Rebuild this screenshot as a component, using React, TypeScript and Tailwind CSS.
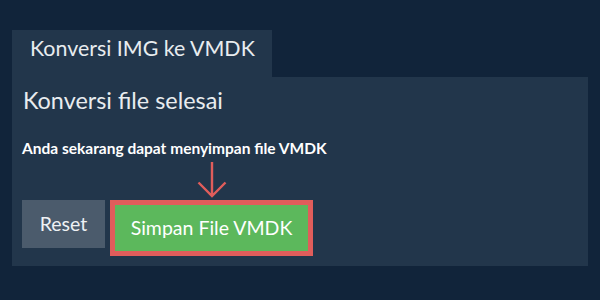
export default function App() {
  return (
    <div
      className="w-[600px] h-[300px] bg-[#11243a] pt-[30px] px-[12px]"
      style={{ fontFamily: 'Lato, "Open Sans", sans-serif' }}
    >
      <div className="flex">
        <div className="w-[260px] h-[47px] bg-[#22364b] text-[#e8ecef] text-[21.4px] leading-[21px] pt-[8px] pl-[18px]">
          Konversi IMG ke VMDK
        </div>
      </div>
      <div className="w-[576px] h-[189px] bg-[#22364b] px-[10px] pt-[9px]">
        <h2 className="text-[23.4px] leading-[28px] text-[#e8ecef] pl-[1px]">Konversi file selesai</h2>
        <p className="mt-[24px] text-[15.5px] leading-[20px] font-bold text-white">
          Anda sekarang dapat menyimpan file VMDK
        </p>
        <div className="flex items-start">
          <button className="mt-[42px] w-[83px] h-[48px] bg-[#4b5b6c] text-[#eef1f4] text-[19.5px]">
            Reset
          </button>
          <div className="ml-[5px] flex flex-col items-center">
            <svg width="30" height="42" viewBox="0 0 30 42" fill="none">
              <path d="M15 4 V38 M1.5 24.5 L15 38 L28.5 24.5" stroke="#e05d5b" strokeWidth="2.4" />
            </svg>
            <div className="border-[5px] border-[#e05d5b]">
              <button className="w-[193px] h-[46px] bg-[#5cb85c] text-white text-[19.5px]">
                Simpan File VMDK
              </button>
            </div>
          </div>
        </div>
      </div>
    </div>
  )
}
